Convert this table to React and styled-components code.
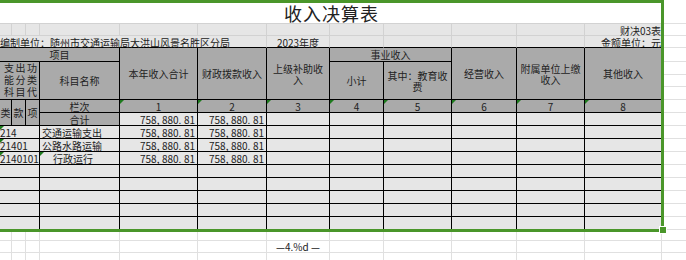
import React from 'react';
import styled, { createGlobalStyle, css } from 'styled-components';

const INK = '#000';
const GRID = '#d2d2d2';
const PALE = '#e0e0e0';
const HEAD = '#aaaaaa';
const FILL = '#e6e6e6';
const GREEN = '#4a962a';
const FLAG = '#1d7a1d';

const GlobalStyle = createGlobalStyle`
  html, body { margin: 0; padding: 0; background: #fff; overflow: hidden; }
  body { font-family: "Noto Sans CJK SC", "Noto Sans", sans-serif; color: #222; }
`;

const Sheet = styled.div`
  position: relative;
  display: grid;
  width: 686px;
  grid-template-columns: 12px 14px 14px 80px 78px 69px 63px 54px 68px 65px 68px 77px 24px;
  grid-template-rows: 24px 12px 12px 14px 13px 12px 13px 13px 13px repeat(8, 13px) 11px 12px 12px;
`;

const alignMap = { left: 'flex-start', center: 'center', right: 'flex-end' };

const Cell = styled.div`
  grid-column: ${p => p.$c} / span ${p => p.$cs || 1};
  grid-row: ${p => p.$r} / span ${p => p.$rs || 1};
  position: relative;
  box-sizing: border-box;
  min-width: 0;
  overflow: hidden;
  display: flex;
  justify-content: ${p => alignMap[p.$align || 'center']};
  text-align: ${p => p.$align || 'center'};
  font-size: 10px;
  white-space: nowrap;
  color: #222;
  ${p => p.$flag && css`
    &::before {
      content: '';
      position: absolute;
      top: 0;
      left: 0;
      border-top: 4px solid ${FLAG};
      border-right: 4px solid transparent;
    }
  `}
`;

const TitleCell = styled(Cell)`
  background: #fff;
  align-items: center;
  padding: 3px 0 0 1px;
  font-size: 18px;
  line-height: 19px;
  letter-spacing: 1px;
  overflow: visible;
  border-bottom: 1px solid ${GRID};
`;

const InfoCell = styled(Cell)`
  background: ${FILL};
  align-items: flex-end;
  padding: 0;
  line-height: 9px;
  overflow: visible;
  border-right: 1px solid ${GRID};
  border-bottom: 1px solid ${p => (p.$edge ? INK : GRID)};
`;

const HeadCell = styled(Cell)`
  background: ${HEAD};
  align-items: ${p => p.$v || 'center'};
  padding: ${p => p.$pad || '0 3px'};
  line-height: ${p => p.$lh || 11}px;
  white-space: normal;
  letter-spacing: ${p => p.$ls || 0}px;
  border-right: 1px solid ${INK};
  border-bottom: 1px solid ${INK};
`;

const DataCell = styled(Cell)`
  background: ${FILL};
  align-items: flex-end;
  padding: ${p => p.$pad || '0 2px'};
  line-height: 10px;
  border-right: 1px solid ${INK};
  border-bottom: 1px solid ${INK};
`;

const BlankCell = styled(Cell)`
  background: #fff;
  align-items: center;
  line-height: 11px;
  border-right: 1px solid ${PALE};
  border-bottom: 1px solid ${PALE};
`;

const StripCell = styled(Cell)`
  grid-column: 13 / span 1;
  background: #fff;
  border-bottom: 1px solid ${PALE};
`;

const Punct = styled.span`
  margin-right: 2.5px;
`;

const Selection = styled.div`
  position: absolute;
  left: -3px;
  top: 0;
  width: 667px;
  height: 232px;
  box-sizing: border-box;
  border: 3px solid ${GREEN};
  pointer-events: none;
`;

const FillHandle = styled.div`
  position: absolute;
  left: 659px;
  top: 226px;
  width: 8px;
  height: 8px;
  box-sizing: border-box;
  border: 1px solid #fff;
  background: ${GREEN};
  pointer-events: none;
`;

function Amount({ value }) {
  if (!value) return null;
  return (
    <span>
      {value.split(/([,.])/).map((part, i) =>
        part === ',' || part === '.' ? <Punct key={i}>{part}</Punct> : part
      )}
    </span>
  );
}

const AMOUNT = '758,880.81';

const dataRows = [
  { code: '214', name: '交通运输支出', total: AMOUNT, fiscal: AMOUNT },
  { code: '21401', name: '公路水路运输', total: AMOUNT, fiscal: AMOUNT },
  { code: '2140101', name: '行政运行', indent: true, total: AMOUNT, fiscal: AMOUNT },
  {}, {}, {}, {}, {},
];

const range = (a, b) => Array.from({ length: b - a + 1 }, (_, i) => a + i);

export default function App() {
  return (
    <>
      <GlobalStyle />
      <Sheet>
        <TitleCell $c={1} $cs={12} $r={1}>收入决算表</TitleCell>

        {range(1, 11).map(c => <InfoCell key={`a${c}`} $c={c} $r={2} />)}
        <InfoCell $c={12} $r={2} $align="right">财决03表</InfoCell>

        <InfoCell $c={1} $cs={6} $r={3} $align="left" $edge>
          编制单位：随州市交通运输局大洪山风景名胜区分局
        </InfoCell>
        <InfoCell $c={7} $r={3} $edge>2023年度</InfoCell>
        {range(8, 11).map(c => <InfoCell key={`b${c}`} $c={c} $r={3} $edge />)}
        <InfoCell $c={12} $r={3} $align="right" $edge>金额单位：元</InfoCell>

        <HeadCell $c={1} $cs={4} $r={4}>项目</HeadCell>
        <HeadCell $c={1} $cs={3} $r={5} $rs={3} $v="flex-start" $pad="0 0 0 4px" $ls={1.5} $lh={12} $align="left">
          支出功能分类科目代码
        </HeadCell>
        <HeadCell $c={4} $r={5} $rs={3}>科目名称</HeadCell>
        <HeadCell $c={5} $r={4} $rs={4}>本年收入合计</HeadCell>
        <HeadCell $c={6} $r={4} $rs={4}>财政拨款收入</HeadCell>
        <HeadCell $c={7} $r={4} $rs={4}>上级补助收入</HeadCell>
        <HeadCell $c={8} $cs={2} $r={4}>事业收入</HeadCell>
        <HeadCell $c={8} $r={5} $rs={3}>小计</HeadCell>
        <HeadCell $c={9} $r={5} $rs={3}>其中：教育收费</HeadCell>
        <HeadCell $c={10} $r={4} $rs={4}>经营收入</HeadCell>
        <HeadCell $c={11} $r={4} $rs={4}>附属单位上缴收入</HeadCell>
        <HeadCell $c={12} $r={4} $rs={4}>其他收入</HeadCell>

        <HeadCell $c={1} $r={8} $rs={2} $pad="0">类</HeadCell>
        <HeadCell $c={2} $r={8} $rs={2} $pad="0">款</HeadCell>
        <HeadCell $c={3} $r={8} $rs={2} $pad="0">项</HeadCell>
        <HeadCell $c={4} $r={8} $v="flex-end" $lh={10}>栏次</HeadCell>
        {range(1, 8).map(n => (
          <HeadCell key={`n${n}`} $c={n + 4} $r={8} $v="flex-end" $lh={10} $flag>{n}</HeadCell>
        ))}

        <HeadCell $c={4} $r={9} $v="flex-end" $lh={10}>合计</HeadCell>
        <DataCell $c={5} $r={9} $align="right"><Amount value={AMOUNT} /></DataCell>
        <DataCell $c={6} $r={9} $align="right"><Amount value={AMOUNT} /></DataCell>
        {range(7, 12).map(c => <DataCell key={`t${c}`} $c={c} $r={9} />)}

        {dataRows.map((row, i) => {
          const r = 10 + i;
          return (
            <React.Fragment key={`d${i}`}>
              <DataCell $c={1} $cs={3} $r={r} $align="left" $pad="0" $flag={!!row.code}>{row.code}</DataCell>
              <DataCell $c={4} $r={r} $align="left" $pad={row.indent ? '0 2px 0 13px' : '0 2px'} $flag={!!row.indent}>
                {row.name}
              </DataCell>
              <DataCell $c={5} $r={r} $align="right"><Amount value={row.total} /></DataCell>
              <DataCell $c={6} $r={r} $align="right"><Amount value={row.fiscal} /></DataCell>
              {range(7, 12).map(c => <DataCell key={`e${c}`} $c={c} $r={r} />)}
            </React.Fragment>
          );
        })}

        {range(18, 20).map(r => (
          <React.Fragment key={`g${r}`}>
            {range(1, 12).map(c => (
              <BlankCell key={`g${r}-${c}`} $c={c} $r={r}>
                {r === 19 && c === 7 ? '—4.%d —' : null}
              </BlankCell>
            ))}
          </React.Fragment>
        ))}

        {range(1, 20).map(r => <StripCell key={`s${r}`} $r={r} />)}

        <Selection />
        <FillHandle />
      </Sheet>
    </>
  );
}
